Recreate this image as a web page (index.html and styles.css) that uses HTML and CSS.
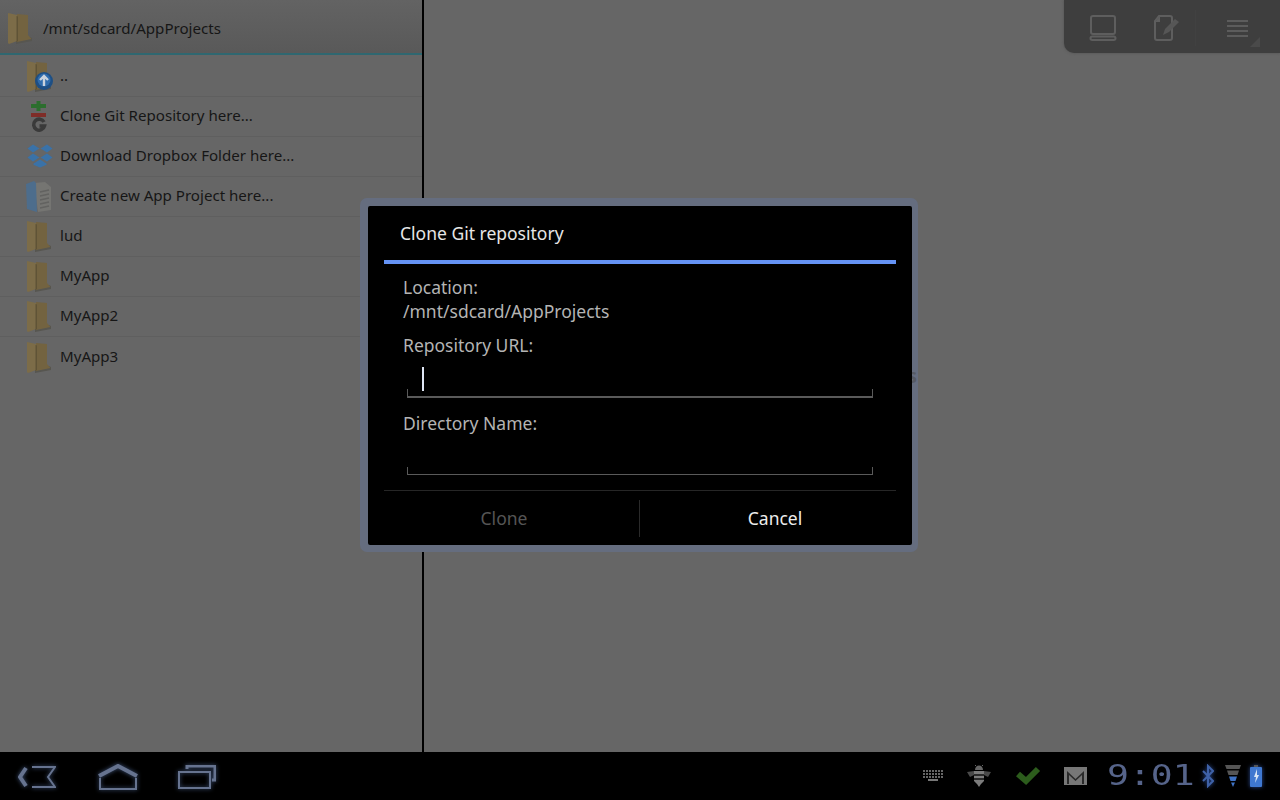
FILE: index.html
```html
<!DOCTYPE html>
<html lang="en">
<head>
    <meta charset="UTF-8">
    <title>Clone Git repository</title>
    <link rel="stylesheet" href="styles.css">
</head>
<body>
    <svg class="defs" width="0" height="0">
        <symbol id="folder" viewBox="0 0 30 36">
            <polygon points="11,35 27,32 27,29 22,27 11,30" fill="#575650"/>
            <polygon points="3,4 12,6 12,32 4,35 3,34" fill="#7c6c48"/>
            <polygon points="12,5 23,6 23,26 26.500,30 12,33" fill="#736340"/>
            <polygon points="11.500,7 13,7.500 13,32 11.500,33" fill="#5f5336"/>
        </symbol>
    </svg>

    <div class="screen">
        <div class="main">
            <!-- File browser -->
            <div class="browser">
                <div class="path-bar">
                    <svg class="path-icon" width="30" height="36"><use href="#folder"/></svg>
                    <span>/mnt/sdcard/AppProjects</span>
                </div>
                <div class="rows">
                    <div class="row">
                        <svg class="row-icon" width="30" height="36" viewBox="0 0 30 36">
                            <use href="#folder"/>
                            <circle cx="20" cy="24" r="9" fill="#1e4f84"/>
                            <circle cx="20" cy="23" r="6.500" fill="#2f6cac"/>
                            <path d="M20 29v-10M16 23l4-4 4 4" fill="none" stroke="#c9d2dc" stroke-width="2.400"/>
                        </svg>
                        <span>..</span>
                    </div>
                    <div class="row">
                        <svg class="row-icon" width="30" height="36" viewBox="0 0 30 36">
                            <path d="M12.500 4h4v3h5.500v4h-5.500v3h-4v-3h-5.500v-4h5.500z" fill="#2c6e2e"/>
                            <rect x="7" y="16" width="15" height="4" fill="#7f2d28"/>
                            <path d="M20 25a5.500 5.500 0 1 0 0.500 4h-5" fill="none" stroke="#3a3a3a" stroke-width="3.500"/>
                        </svg>
                        <span>Clone Git Repository here...</span>
                    </div>
                    <div class="row">
                        <svg class="row-icon" width="30" height="36" viewBox="0 0 30 36">
                            <path d="M9 7l7 4.500-7 4.500-6-4.500zM23 7l6 4.500-6 4.500-7-4.500zM9 16l7 4.500-7 4.500-6-4.500zM23 16l6 4.500-6 4.500-7-4.500zM9 26.500l7-4.500 7 4.500v1.500l-7 3-7-3z" fill="#3a72a8" stroke="#666" stroke-width="0.800"/>
                        </svg>
                        <span>Download Dropbox Folder here...</span>
                    </div>
                    <div class="row">
                        <svg class="row-icon" width="30" height="36" viewBox="0 0 30 36">
                            <polygon points="10,6 21,5 27,10 27,33 14,35" fill="#757572"/>
                            <path d="M16 15l9-2M16 19l9-2M16 23l9-2M16 27l9-2M16 31l9-2" stroke="#626260" stroke-width="1.500"/>
                            <polygon points="2,7 10,4 12,6 13,35 3,32" fill="#4d6d8c"/>
                        </svg>
                        <span>Create new App Project here...</span>
                    </div>
                    <div class="row"><svg class="row-icon" width="30" height="36"><use href="#folder"/></svg><span>lud</span></div>
                    <div class="row"><svg class="row-icon" width="30" height="36"><use href="#folder"/></svg><span>MyApp</span></div>
                    <div class="row"><svg class="row-icon" width="30" height="36"><use href="#folder"/></svg><span>MyApp2</span></div>
                    <div class="row row-last"><svg class="row-icon" width="30" height="36"><use href="#folder"/></svg><span>MyApp3</span></div>
                </div>
            </div>

            <!-- Editor side -->
            <div class="editor">
                <div class="action-bar">
                    <svg class="action laptop" width="28" height="28" viewBox="0 0 28 28" fill="none" stroke="#5e5e5e" stroke-width="2">
                        <rect x="2" y="2" width="24" height="18" rx="2"/>
                        <rect x="1.500" y="22.500" width="25" height="3.500" rx="1.700"/>
                    </svg>
                    <svg class="action note" width="28" height="28" viewBox="0 0 28 28">
                        <path d="M7 2h11a2 2 0 0 1 2 2v20a2 2 0 0 1 -2 2h-13a2 2 0 0 1 -2-2v-17z" fill="none" stroke="#5e5e5e" stroke-width="2"/>
                        <path d="M3 8l5-6v6z" fill="#5e5e5e"/>
                        <path d="M11 21l2-6 10-10 4 3-10 10z" fill="#565656"/>
                    </svg>
                    <span class="action-sep"></span>
                    <div class="menu-icon"><i></i><i></i><i></i><i></i></div>
                    <span class="menu-corner"></span>
                </div>
                <div class="editor-hint">s</div>
            </div>
        </div>

        <!-- System bar -->
        <div class="system-bar">
            <svg class="nav back" width="38" height="24" viewBox="0 0 38 24" fill="none" stroke="#66738f" stroke-width="2">
                <path d="M8 3l-6 9 6 9" stroke-width="4"/>
                <path d="M14 2h23l-7 10 7 10h-23"/>
            </svg>
            <svg class="nav home" width="40" height="26" viewBox="0 0 40 26" fill="none" stroke="#66738f" stroke-width="2">
                <path d="M1 12l19-10 19 10" stroke-width="4"/>
                <path d="M2 14v11h36v-11"/>
            </svg>
            <svg class="nav recent" width="38" height="24" viewBox="0 0 38 24" fill="none" stroke="#66738f" stroke-width="2">
                <path d="M9 4v-3h28v14h-3" stroke-width="3"/>
                <path d="M1 7h31v16h-31z"/>
            </svg>

            <div class="status">
                <svg class="st-keyboard" width="20" height="12" viewBox="0 0 20 12">
                    <path d="M0 1h20M0 4h20M0 7h20" stroke="#666" stroke-width="2" stroke-dasharray="2 1"/>
                    <rect x="5" y="9" width="10" height="2" fill="#777"/>
                </svg>
                <svg class="st-bug" width="24" height="22" viewBox="0 0 24 22">
                    <path d="M0 7l7-1v4l-4 2zM24 7l-7-1v4l4 2z" fill="#4a4a4a"/>
                    <path d="M8 5a4 4.500 0 0 1 8 0z" fill="#666"/>
                    <path d="M9 1l-1-1M15 1l1-1" stroke="#666"/>
                    <path d="M7 6h10v10l-3 3-2 3-2-3-3-3z" fill="#7c7c7c"/>
                    <path d="M7 10h10M7 14h10" stroke="#111" stroke-width="1.500"/>
                </svg>
                <svg class="st-check" width="26" height="20" viewBox="0 0 26 20">
                    <path d="M3 8l8 7 12-12" fill="none" stroke="#2c5c1c" stroke-width="6"/>
                </svg>
                <svg class="st-mail" width="23" height="18" viewBox="0 0 23 18">
                    <rect width="23" height="18" fill="#777"/>
                    <path d="M3 17v-13l8.500 8 8.500-8v13z" fill="#2a2a2a"/>
                    <path d="M5 17v-9l6.500 6 6.500-6v9z" fill="#777"/>
                </svg>
                <span class="clock">9:01</span>
                <svg class="st-bt" width="12" height="24" viewBox="0 0 12 24" fill="none" stroke="#3f62a8" stroke-width="2">
                    <path d="M1 7l10 10-5 5v-20l5 5-10 10"/>
                </svg>
                <svg class="st-signal" width="16" height="22" viewBox="0 0 16 22">
                    <polygon points="0,0 16,0 14.500,4 1.500,4" fill="#555"/>
                    <polygon points="2,5.500 14,5.500 12.500,10 3.500,10" fill="#555"/>
                    <polygon points="4,11.500 12,11.500 10.500,16 5.500,16" fill="#3f72c4"/>
                    <polygon points="6,17.500 10,17.500 8,22" fill="#3f72c4"/>
                </svg>
                <svg class="st-battery" width="12" height="22" viewBox="0 0 12 22">
                    <rect x="4" y="0" width="4" height="2" fill="#555"/>
                    <rect x="0" y="2" width="12" height="20" rx="1" fill="#3f78d0"/>
                    <path d="M7 4l-3 8h2l-1 6 4-8h-2z" fill="#d8e6f5"/>
                </svg>
            </div>
        </div>

        <!-- Dialog over everything -->
        <div class="dialog-frame">
            <div class="dialog">
                <div class="dialog-title">Clone Git repository</div>
                <div class="dialog-body">
                    <div class="field-label location">Location:<br>/mnt/sdcard/AppProjects</div>
                    <div class="field-label url-label">Repository URL:</div>
                    <div class="input input-focus"><span class="cursor"></span></div>
                    <div class="field-label dir-label">Directory Name:</div>
                    <div class="input"></div>
                </div>
                <div class="dialog-buttons">
                    <div class="btn btn-disabled">Clone</div>
                    <div class="btn btn-cancel">Cancel</div>
                </div>
            </div>
        </div>
    </div>
</body>
</html>
```

FILE: styles.css
```css
body {
    margin: 0;
    font-family: "Noto Sans", "Open Sans", sans-serif;
    background: #000;
    overflow: hidden;
}
.defs {
    position: absolute;
}
.screen {
    position: relative;
    width: 1280px;
    height: 800px;
    display: flex;
    flex-direction: column;
}
.main {
    height: 752px;
    display: flex;
    background: #666;
}

/* file browser */
.browser {
    width: 422px;
    border-right: 2px solid #000;
    font-size: 15.100px;
    color: #161616;
}
.path-bar {
    height: 51px;
    display: flex;
    align-items: center;
    padding: 2px 0 0 5px;
    background: linear-gradient(#636363, #595959);
    border-bottom: 2px solid #2f6770;
}
.path-icon {
    margin: -2px 8px 0 0;
}
.rows {
    padding-top: 2px;
}
.row {
    height: 40px;
    box-sizing: border-box;
    display: flex;
    align-items: center;
    padding: 0 0 3px 24px;
    border-bottom: 1px solid #5f5f5f;
}
.row-last {
    border-bottom: none;
}
.row-icon {
    margin-right: 6px;
}

/* right side */
.editor {
    flex: 1;
    display: flex;
    flex-direction: column;
}
.action-bar {
    align-self: flex-end;
    width: 216px;
    height: 51px;
    padding-top: 2px;
    display: flex;
    align-items: center;
    position: relative;
    background: #3e3e3e;
    border-bottom-left-radius: 10px;
    box-shadow: 0 0 3px #505050;
}
.action.laptop {
    margin-left: 25px;
}
.action.note {
    margin-left: 35px;
}
.action-sep {
    width: 1px;
    height: 36px;
    margin-left: 15px;
    background: #414141;
}
.menu-icon {
    margin: 1px 0 0 31px;
    width: 21px;
    display: flex;
    flex-direction: column;
    gap: 3px;
}
.menu-icon i {
    display: block;
    height: 2px;
    background: #5c5c5c;
}
.menu-corner {
    position: absolute;
    right: 20px;
    bottom: 6px;
    border-left: 10px solid transparent;
    border-bottom: 10px solid #4a4a4a;
}
.editor-hint {
    position: relative;
    z-index: 1;
    margin-top: 309px;
    padding-right: 363px;
    text-align: right;
    font-size: 20px;
    font-weight: bold;
    color: #565a63;
}

/* bottom bar */
.system-bar {
    height: 48px;
    display: flex;
    align-items: center;
    background: #000;
}
.nav {
    filter: drop-shadow(0 0 2px #3f5378);
}
.back {
    margin-left: 18px;
    margin-top: 2px;
}
.home {
    margin-left: 42px;
    margin-top: 1px;
}
.recent {
    margin-left: 40px;
    margin-top: 1px;
}
.status {
    margin-left: auto;
    display: flex;
    align-items: center;
}
.st-keyboard {
    margin-right: 24px;
}
.st-bug {
    margin-right: 24px;
}
.st-check {
    margin-right: 23px;
}
.st-mail {
    margin-right: 20px;
}
.clock {
    width: 88px;
    margin-right: 7px;
    font-family: "DejaVu Sans Mono", monospace;
    font-size: 28px;
    line-height: 28px;
    color: #56648a;
    transform: scaleX(1.3);
    transform-origin: left center;
}
.st-bt {
    margin-right: 11px;
    filter: drop-shadow(0 0 2px #2a4a90);
}
.st-signal {
    margin-right: 9px;
}
.st-battery {
    margin-right: 18px;
    filter: drop-shadow(0 0 2px #2a4a90);
}

/* dialog */
.dialog-frame {
    position: absolute;
    left: 360px;
    top: 198px;
    width: 544px;
    padding: 8px 6px 7px 8px;
    background: #656d7f;
    border-radius: 7px;
}
.dialog {
    position: relative;
    z-index: 2;
    height: 339px;
    background: #000;
    display: flex;
    flex-direction: column;
    padding: 0 16px;
    box-sizing: border-box;
    width: 544px;
    border-radius: 2px;
}
.dialog-title {
    height: 58px;
    flex: none;
    box-sizing: border-box;
    padding: 15px 0 0 16px;
    font-size: 17.500px;
    line-height: 24px;
    color: #e6e6e6;
    border-bottom: 4px solid #6593f5;
}
.dialog-body {
    flex: 1;
    padding: 11px 19px 0;
    font-size: 17.500px;
    line-height: 24px;
    color: #b4b4b4;
}
.url-label {
    margin-top: 10px;
}
.input {
    height: 35px;
    margin: 5px 4px 0;
    box-sizing: border-box;
    padding: 5px 0 0 15px;
    border-bottom: 1px solid #5a5a5a;
    position: relative;
}
.input-focus {
    height: 36px;
    border-bottom-width: 2px;
}
.input::before,
.input::after {
    content: "";
    position: absolute;
    bottom: 0;
    width: 1px;
    height: 7px;
    background: #5a5a5a;
}
.input::before {
    left: 0;
}
.input::after {
    right: 0;
}
.cursor {
    display: block;
    width: 1.500px;
    height: 24px;
    background: #dfe6f5;
}
.dir-label {
    margin-top: 13px;
}
.dialog-buttons {
    height: 55px;
    flex: none;
    display: flex;
    border-top: 1px solid #262626;
    box-sizing: border-box;
    padding: 9px 0 8px;
}
.btn {
    text-align: center;
    font-size: 17.500px;
    line-height: 37px;
    color: #ececec;
}
.btn-disabled {
    width: 256px;
    box-sizing: border-box;
    padding-right: 15px;
    color: #555;
    border-right: 1px solid #2a2a2a;
}
.btn-cancel {
    flex: 1;
    padding-left: 14px;
}
```
